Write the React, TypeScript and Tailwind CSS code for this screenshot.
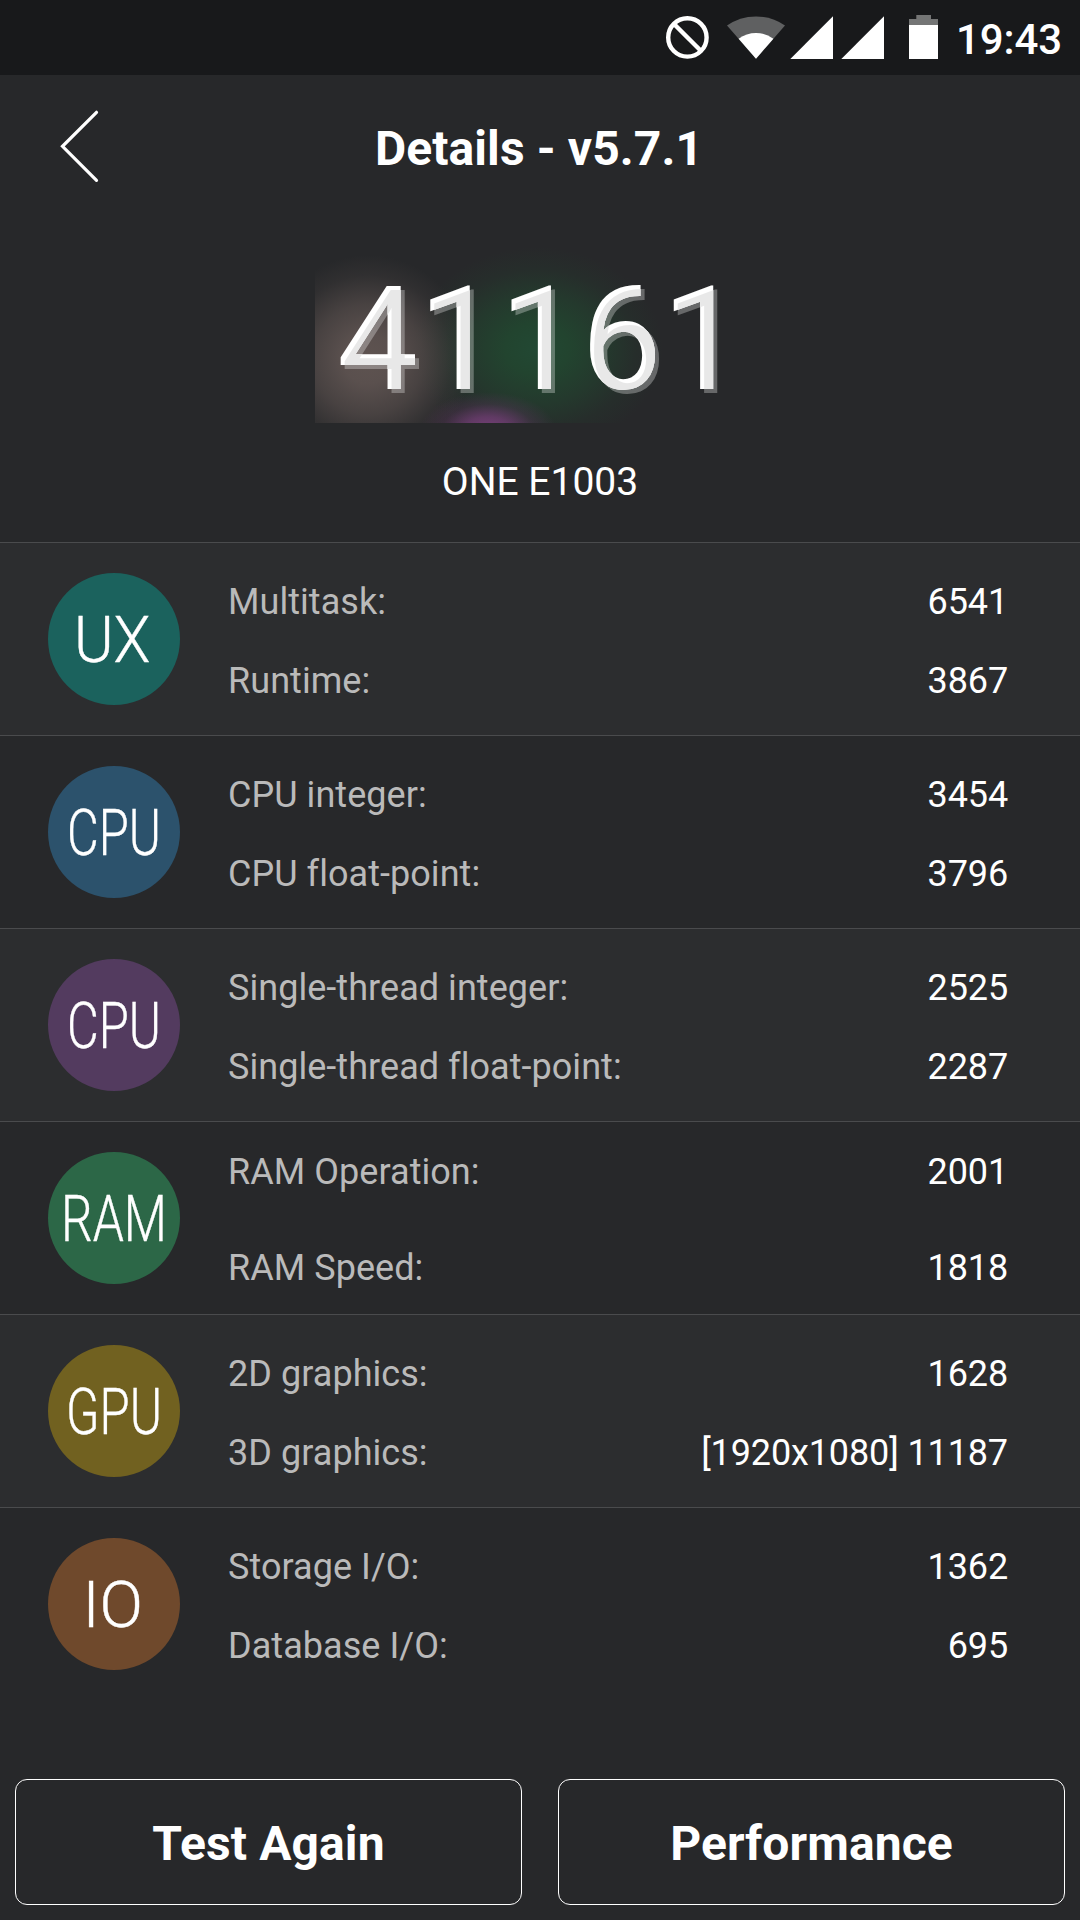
interface ScoreItem {
  label: string
  value: string
}

interface ScoreGroup {
  id: string
  badge: string
  badgeX: number
  badgeWidth: number
  color: string
  rowClass: string
  lineClass: string
  items: ScoreItem[]
}

const groups: ScoreGroup[] = [
  {
    id: "ux",
    badge: "UX",
    badgeX: 26,
    badgeWidth: 76.5,
    color: "fill-[#1b625d]",
    rowClass: "bg-[#2c2d2f]",
    lineClass: "h-[79px] pt-[2px]",
    items: [
      { label: "Multitask:", value: "6541" },
      { label: "Runtime:", value: "3867" },
    ],
  },
  {
    id: "cpu-multi",
    badge: "CPU",
    badgeX: 19,
    badgeWidth: 94,
    color: "fill-[#2c526c]",
    rowClass: "",
    lineClass: "h-[79px] pt-[2px]",
    items: [
      { label: "CPU integer:", value: "3454" },
      { label: "CPU float-point:", value: "3796" },
    ],
  },
  {
    id: "cpu-single",
    badge: "CPU",
    badgeX: 19,
    badgeWidth: 94,
    color: "fill-[#533b5f]",
    rowClass: "bg-[#2c2d2f]",
    lineClass: "h-[79px] pt-[2px]",
    items: [
      { label: "Single-thread integer:", value: "2525" },
      { label: "Single-thread float-point:", value: "2287" },
    ],
  },
  {
    id: "ram",
    badge: "RAM",
    badgeX: 13,
    badgeWidth: 106,
    color: "fill-[#2c6747]",
    rowClass: "",
    lineClass: "h-[96px]",
    items: [
      { label: "RAM Operation:", value: "2001" },
      { label: "RAM Speed:", value: "1818" },
    ],
  },
  {
    id: "gpu",
    badge: "GPU",
    badgeX: 18,
    badgeWidth: 96,
    color: "fill-[#716120]",
    rowClass: "bg-[#2c2d2f]",
    lineClass: "h-[79px] pt-[2px]",
    items: [
      { label: "2D graphics:", value: "1628" },
      { label: "3D graphics:", value: "[1920x1080] 11187" },
    ],
  },
  {
    id: "io",
    badge: "IO",
    badgeX: 34.5,
    badgeWidth: 60.5,
    color: "fill-[#6f492c]",
    rowClass: "",
    lineClass: "h-[79px] pt-[2px]",
    items: [
      { label: "Storage I/O:", value: "1362" },
      { label: "Database I/O:", value: "695" },
    ],
  },
]

const StatusBar = () => (
  <div className="flex h-[75px] items-start justify-end bg-[#18191b] pr-[18px]">
    {/* No notifications */}
    <svg width="44" height="75" viewBox="0 0 44 75" className="mr-[17px]" fill="none" stroke="#fff" strokeWidth="4.4">
      <circle cx="22.4" cy="37.4" r="19.2" />
      <path d="M9 24 L35.8 50.8" />
    </svg>

    {/* Wifi */}
    <svg width="60" height="75" viewBox="0 0 60 75" className="mr-[4px]">
      <path d="M30 58.7 L1 25.6 Q13.5 16.4 30 16.4 Q46.5 16.4 59 25.6 Z" fill="#5f6061" />
      <path d="M30 58.7 L12.6 38.7 Q20.5 33 30 33 Q39.5 33 47.4 38.7 Z" fill="#fff" />
    </svg>

    {/* Signal, one per sim */}
    <svg width="43" height="75" viewBox="0 0 43 75" className="mr-[8px]">
      <path d="M0.3 59 L43 16.3 V59 Z" fill="#fff" />
    </svg>
    <svg width="43" height="75" viewBox="0 0 43 75" className="mr-[25px]">
      <path d="M0.3 59 L43 16.3 V59 Z" fill="#fff" />
    </svg>

    {/* Battery */}
    <svg width="29" height="75" viewBox="0 0 29 75" className="mr-[18px]">
      <path d="M0 25 V19 H7.3 V15 H22 V19 H29 V25 Z" fill="#747575" />
      <path d="M0 25 H29 V59 H0 Z" fill="#fff" />
    </svg>

    <span className="pt-[15px] text-[42px] leading-[49px] font-medium tracking-[-0.1px]">19:43</span>
  </div>
)

const Header = () => (
  <header className="grid h-[145px] grid-cols-[160px_1fr_160px] items-center">
    <button type="button" aria-label="Back" className="pb-[2px] pl-[58px]">
      <svg width="44" height="76" viewBox="0 0 44 76" fill="none" stroke="#fff" strokeWidth="3.2" strokeLinecap="round">
        <path d="M38.5 3.3 L4.5 37.3 L38.5 71.3" />
      </svg>
    </button>
    <h1 className="pt-[3px] pr-[2px] text-center text-[48px] leading-[56px] font-bold tracking-[0.1px]">
      Details - v5.7.1
    </h1>
  </header>
)

const TotalScore = () => (
  <section className="flex h-[322px] flex-col items-center pt-[22px]">
    {/* Bevel and drop shadow for the score digits */}
    <svg width="0" height="0" className="absolute">
      <filter id="bevel" x="-5%" y="-5%" width="110%" height="110%" colorInterpolationFilters="sRGB">
        <feOffset in="SourceAlpha" dx="4" dy="4" result="shifted" />
        <feFlood floodColor="#fff" floodOpacity="0.3" />
        <feComposite in2="shifted" operator="in" result="shadow" />
        <feFlood floodColor="#e8e8e8" />
        <feComposite in2="shifted" operator="in" />
        <feComposite in2="SourceAlpha" operator="in" result="face" />
        <feMerge>
          <feMergeNode in="shadow" />
          <feMergeNode in="SourceGraphic" />
          <feMergeNode in="face" />
        </feMerge>
      </filter>
    </svg>

    <div className="flex h-[181px] w-[450px] items-start bg-[radial-gradient(68px_38px_at_173px_188px,rgba(126,66,128,0.95)_0%,rgba(115,62,118,0.75)_35%,rgba(95,55,97,0.3)_68%,transparent_100%),radial-gradient(circle_at_53px_117px,#5e5350_0,#5a504e_25px,rgba(90,80,78,0.65)_55px,rgba(90,80,78,0.18)_84px,transparent_104px),radial-gradient(126px_102px_at_222px_107px,#224833_0%,#22442f_25%,rgba(34,68,47,0.6)_54%,rgba(34,68,47,0.2)_78%,transparent_100%)] pl-[22px]">
      <div className="pt-[13px] text-[144.5px] leading-[169px] [filter:url(#bevel)]">41161</div>
    </div>

    <div className="mt-[36px] text-[39px] leading-[46px]">ONE E1003</div>
  </section>
)

const Badge = ({ group }: { group: ScoreGroup }) => (
  <svg width="132" height="132" viewBox="0 0 132 132" className="shrink-0 overflow-visible">
    <circle cx="66" cy="66" r="66" className={group.color} />
    <text
      x={group.badgeX}
      y="88.7"
      textLength={group.badgeWidth}
      lengthAdjust="spacingAndGlyphs"
      className="fill-white stroke-white stroke-[0.4px] text-[64px] font-light"
    >
      {group.badge}
    </text>
  </svg>
)

const ScoreRow = ({ group }: { group: ScoreGroup }) => (
  <li className={`flex h-[193px] items-center border-t border-[#4a4b4d] pr-[72px] pl-[48px] ${group.rowClass}`}>
    <Badge group={group} />
    <div className="ml-[48px] flex-1 pt-[3px]">
      {group.items.map((item) => (
        <div
          key={item.label}
          className={`flex items-center justify-between text-[36px] [font-variant-ligatures:none] ${group.lineClass}`}
        >
          <span className="tracking-[0.05px] text-[#bababa]">{item.label}</span>
          <span className="tracking-[-0.12px]">{item.value}</span>
        </div>
      ))}
    </div>
  </li>
)

const App = () => {
  return (
    <div className="flex h-[1920px] w-[1080px] flex-col bg-[#27282a] font-['Roboto',sans-serif] text-white">
      <StatusBar />
      <Header />
      <TotalScore />

      <ul>
        {groups.map((group) => (
          <ScoreRow key={group.id} group={group} />
        ))}
      </ul>

      <div className="mt-auto mb-[15px] grid grid-cols-2 gap-[36px] px-[15px]">
        <button
          type="button"
          className="h-[126px] rounded-xl border border-white pt-[3px] text-[48px] font-bold tracking-[0.1px]"
        >
          Test Again
        </button>
        <button
          type="button"
          className="h-[126px] rounded-xl border border-white pt-[3px] text-[48px] font-bold tracking-[0.1px]"
        >
          Performance
        </button>
      </div>
    </div>
  )
}

export default App
